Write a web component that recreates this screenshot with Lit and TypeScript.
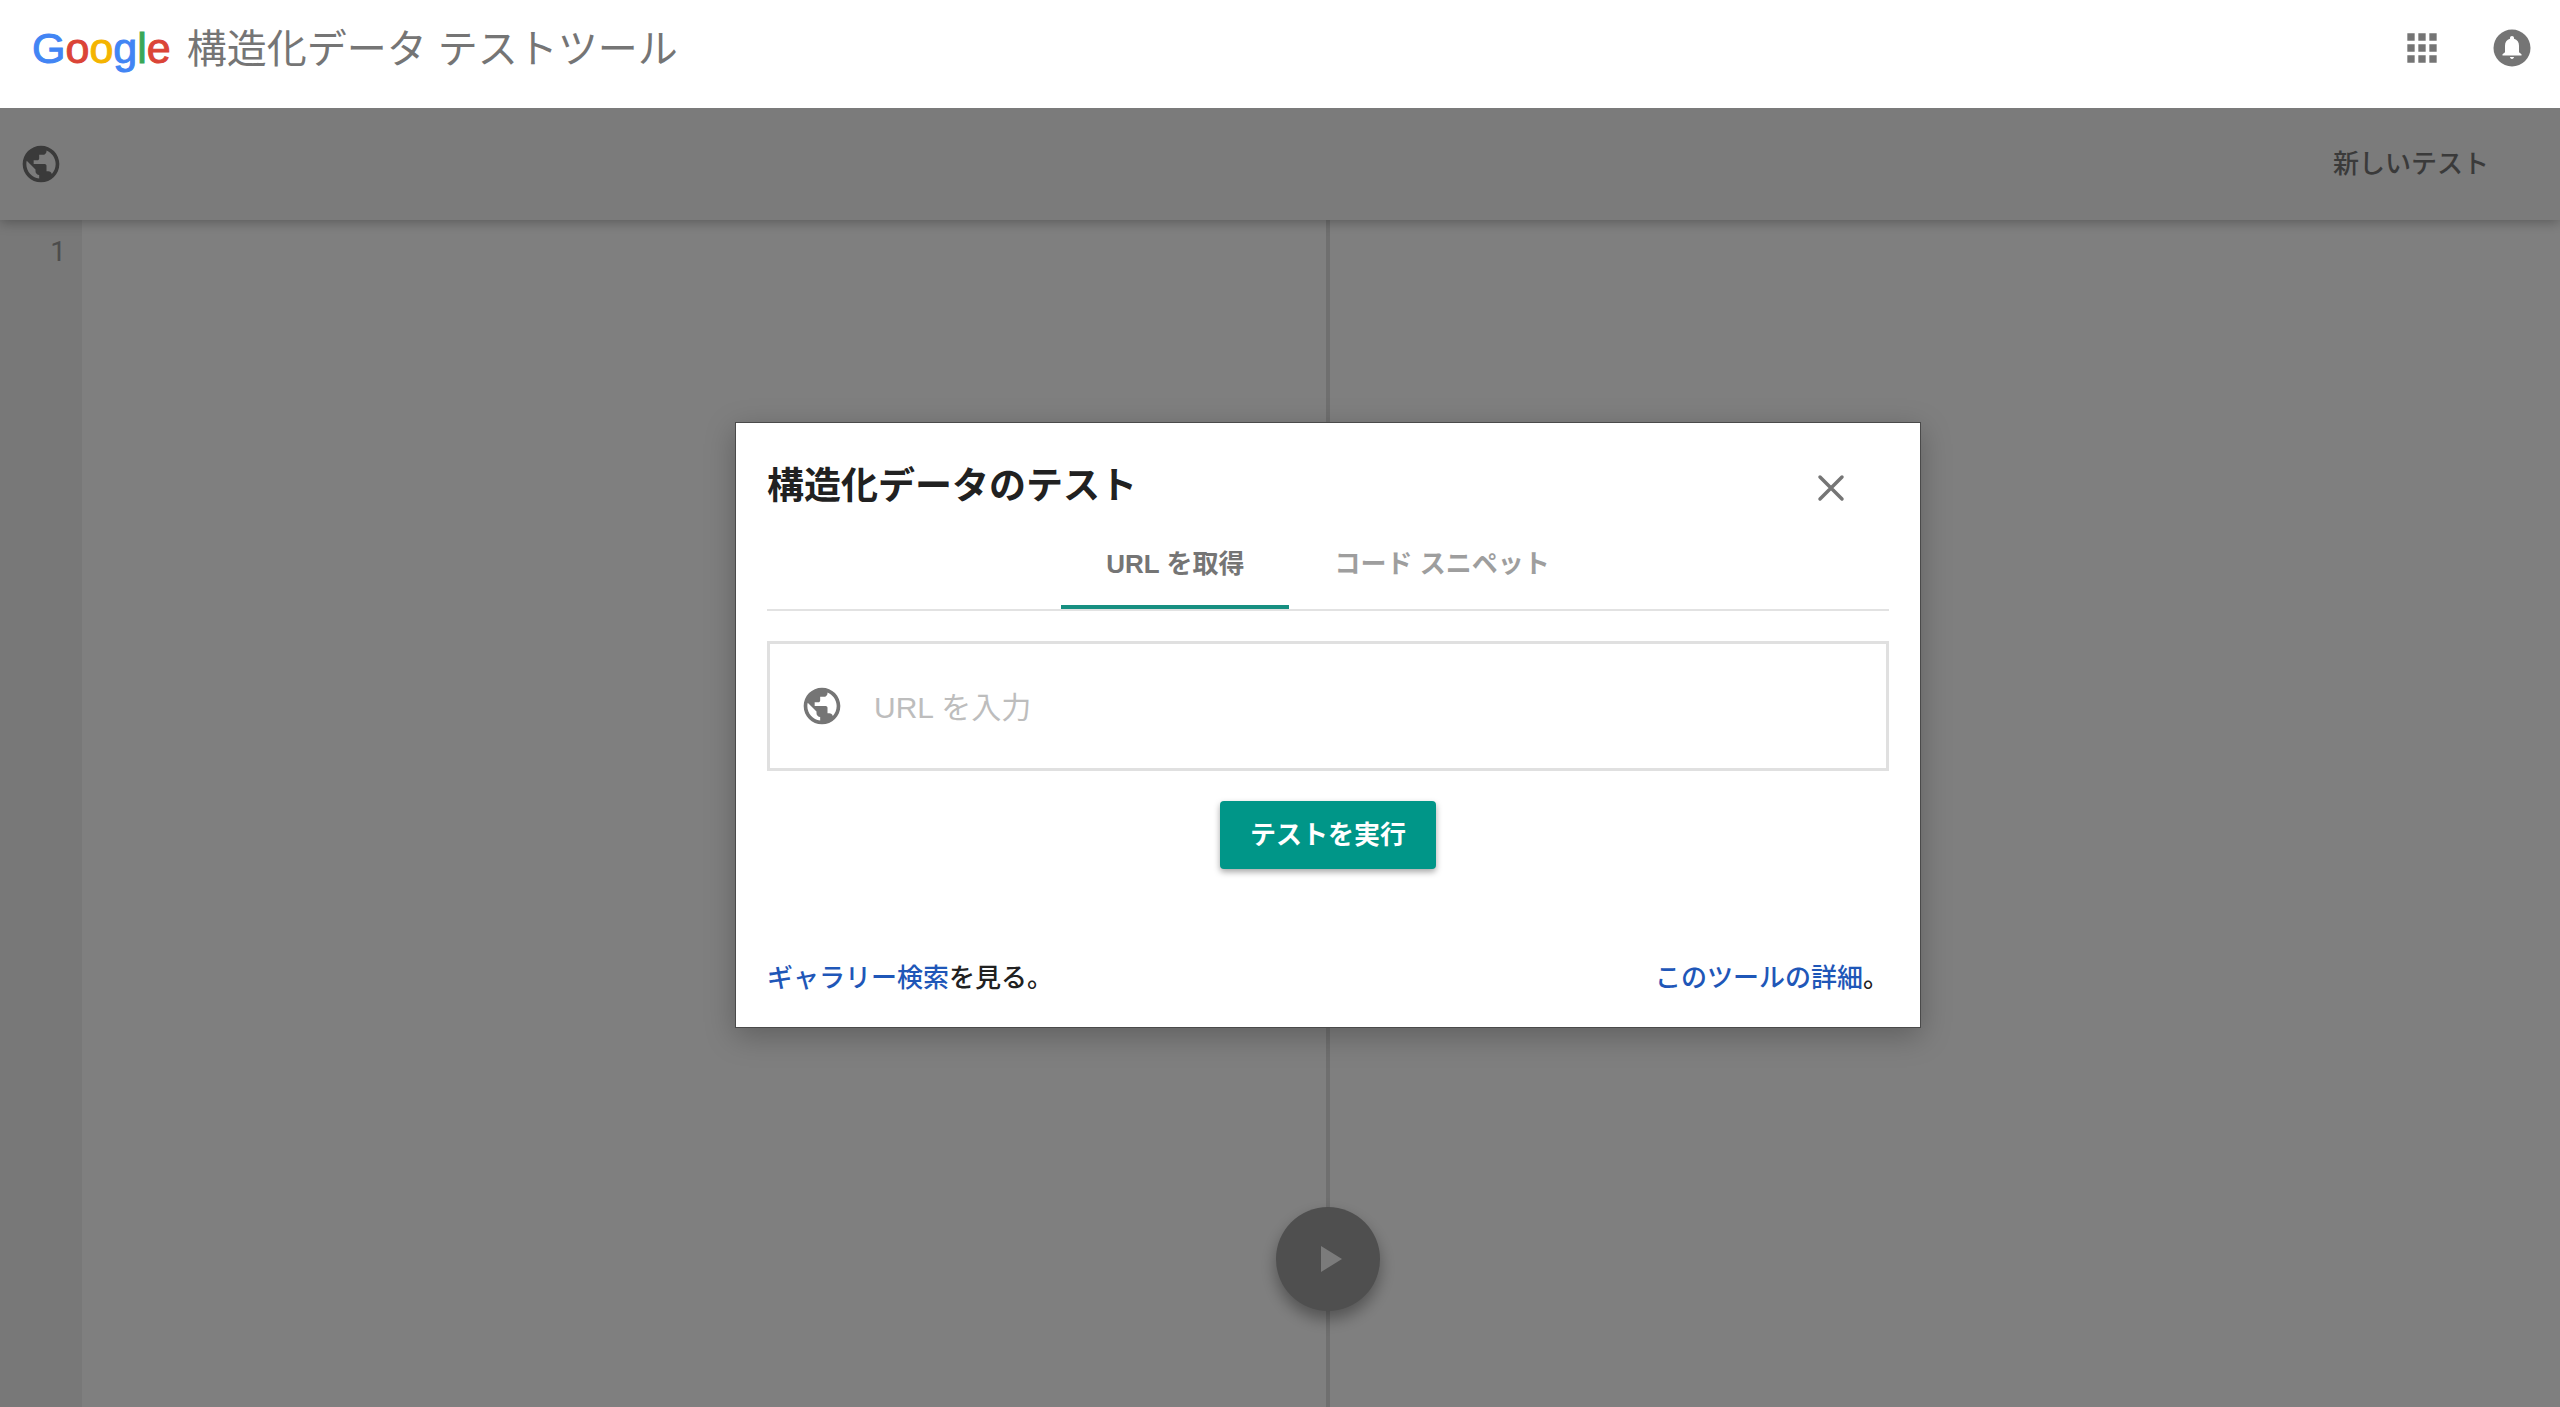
import { LitElement, html, css, svg } from "lit";
import { customElement, state } from "lit/decorators.js";
import { classMap } from "lit/directives/class-map.js";

const LOGO = [
  ["G", "blue"],
  ["o", "red"],
  ["o", "yellow"],
  ["g", "blue"],
  ["l", "green"],
  ["e", "red"],
];

const TABS = ["URL を取得", "コード スニペット"];

const globePath = svg`<path d="M12 2C6.48 2 2 6.48 2 12s4.48 10 10 10 10-4.48 10-10S17.52 2 12 2zm-1 17.93c-3.95-.49-7-3.85-7-7.93 0-.62.08-1.21.21-1.79L9 15v1c0 1.1.9 2 2 2v1.93zm6.9-2.54c-.26-.81-1-1.39-1.9-1.39h-1v-3c0-.55-.45-1-1-1H8v-2h2c.55 0 1-.45 1-1V7h2c1.1 0 2-.9 2-2v-.41c2.93 1.19 5 4.06 5 7.41 0 2.08-.8 3.97-2.1 5.39z"/>`;

const globe = html`<svg class="icon" viewBox="0 0 24 24" aria-hidden="true">${globePath}</svg>`;

@customElement("app-root")
export class AppRoot extends LitElement {
  @state() private tab = 0;

  static styles = css`
    :host {
      display: flex;
      flex-direction: column;
      min-height: 100vh;
      background: #fff;
      color: #212121;
      font-family: "Liberation Sans", "Noto Sans CJK JP", sans-serif;
      font-size: 26px;
      line-height: 40px;
    }
    * {
      box-sizing: border-box;
    }
    button,
    input {
      margin: 0;
      padding: 0;
      border: 0;
      background: none;
      font: inherit;
      color: inherit;
    }
    button {
      cursor: pointer;
    }
    a {
      color: #1f57b8;
      text-decoration: none;
    }
    .icon {
      display: block;
      width: 44px;
      height: 44px;
      fill: currentColor;
    }
    .header {
      display: flex;
      align-items: center;
      height: 108px;
      padding: 0 26px 12px 32px;
      color: #757575;
    }
    .brand {
      display: flex;
      align-items: baseline;
      flex: 1;
      gap: 16px;
      margin: 0;
      font-size: 40px;
      line-height: 60px;
      font-weight: 400;
    }
    .logo {
      font-size: 43px;
      -webkit-text-stroke: 1px currentColor;
    }
    .blue { color: #4285f4; }
    .red { color: #db4437; }
    .yellow { color: #f4b400; }
    .green { color: #3aa757; }
    .actions {
      display: flex;
      align-items: center;
      gap: 46px;
    }
    .stage {
      position: relative;
      display: flex;
      flex-direction: column;
      flex: 1;
      overflow: hidden;
    }
    .toolbar {
      position: relative;
      display: flex;
      align-items: center;
      justify-content: space-between;
      height: 112px;
      padding: 0 71px 0 19px;
      background: #f6f6f6;
      color: #757575;
      box-shadow: 0 2px 12px rgba(0, 0, 0, 0.3);
    }
    .new-test {
      font-weight: 500;
    }
    .panes {
      display: flex;
      flex: 1;
    }
    .editor {
      display: flex;
      width: calc(50% + 50px);
      border-right: 4px solid #dedede;
    }
    .gutter {
      width: 82px;
      padding: 12px 16px;
      background: #f0f0f0;
      color: #999;
      font-family: Roboto, sans-serif;
      font-size: 28px;
      text-align: right;
    }
    .run {
      position: absolute;
      left: calc(50% + 48px);
      bottom: 96px;
      display: grid;
      place-items: center;
      width: 104px;
      height: 104px;
      margin-left: -52px;
      border-radius: 50%;
      background: #9e9e9e;
      color: #f6f6f6;
      box-shadow: 0 8px 16px rgba(0, 0, 0, 0.35);
    }
    .scrim {
      position: absolute;
      inset: 0;
      display: flex;
      justify-content: center;
      align-items: flex-start;
      padding: 314px 0 0 96px;
      background: rgba(0, 0, 0, 0.5);
    }
    .dialog {
      width: 1186px;
      max-width: 100%;
      padding: 34px 31px 29px;
      border: 1px solid #4a4a4a;
      background: #fff;
      background-clip: padding-box;
      box-shadow: 0 8px 28px rgba(0, 0, 0, 0.25);
    }
    .dialog-head {
      display: flex;
      align-items: center;
      justify-content: space-between;
      height: 60px;
      padding-right: 36px;
    }
    .dialog-title {
      margin: 0;
      font-size: 37px;
      line-height: 60px;
      font-weight: 700;
    }
    .close {
      color: #757575;
    }
    .cross {
      fill: none;
      stroke: currentColor;
      stroke-width: 3.5;
      stroke-linecap: round;
    }
    .tabs {
      display: flex;
      justify-content: center;
      border-bottom: 2px solid #e2e2e2;
    }
    .tab {
      height: 92px;
      padding: 6px 45px 0;
      border-bottom: 4px solid transparent;
      color: #9e9e9e;
      font-weight: 700;
    }
    .tab.active {
      border-bottom-color: #168f81;
      color: #757575;
    }
    .field {
      display: flex;
      align-items: center;
      gap: 30px;
      height: 130px;
      margin: 30px 0;
      padding: 0 30px;
      border: 3px solid #e0e0e0;
      color: #757575;
    }
    .url {
      flex: 1;
      min-width: 0;
      height: 60px;
      padding-top: 4px;
      outline: 0;
      font-size: 30px;
    }
    .url::placeholder {
      color: #bdbdbd;
      opacity: 1;
    }
    .submit {
      display: block;
      height: 68px;
      margin: 0 auto;
      padding: 0 30px;
      border-radius: 4px;
      background: #009688;
      color: #fff;
      font-weight: 700;
      box-shadow: 0 3px 6px rgba(0, 0, 0, 0.35);
    }
    .links {
      display: flex;
      justify-content: space-between;
      margin-top: 89px;
      font-weight: 500;
    }
    .links p {
      margin: 0;
    }
  `;

  render() {
    return html`
      <header class="header">
        <h1 class="brand">
          <span class="logo">${LOGO.map(([ch, tone]) => html`<span class=${tone}>${ch}</span>`)}</span>
          <span>構造化データ テストツール</span>
        </h1>
        <div class="actions">
          <button aria-label="アプリ">
            <svg class="icon" viewBox="0 0 24 24">
              <path d="M4 8h4V4H4v4zm6 12h4v-4h-4v4zm-6 0h4v-4H4v4zm0-6h4v-4H4v4zm6 0h4v-4h-4v4zm6-10v4h4V4h-4zm-6 4h4V4h-4v4zm6 6h4v-4h-4v4zm0 6h4v-4h-4v4z" />
            </svg>
          </button>
          <button aria-label="通知">
            <svg class="icon" viewBox="0 0 44 44">
              <circle cx="22" cy="22" r="18.5" />
              <path fill="#fff" d="M22 10c1.200 0 2 .9 2 2v.7c3.300.9 5 3.600 5 7v6.600l2.500 2v1.200h-19v-1.200l2.500-2v-6.600c0-3.400 1.700-6.100 5-7v-.7c0-1.100.8-2 2-2zM20 31h4c0 1.100-.9 1.900-2 1.900s-2-.8-2-1.900z" />
            </svg>
          </button>
        </div>
      </header>
      <main class="stage">
        <div class="toolbar">
          ${globe}
          <button class="new-test">新しいテスト</button>
        </div>
        <div class="panes">
          <div class="editor"><div class="gutter">1</div></div>
        </div>
        <button class="run" aria-label="実行">
          <svg class="icon" viewBox="0 0 44 44"><path d="M15 9v26l21-13z" /></svg>
        </button>
        <div class="scrim">
          <section class="dialog" role="dialog" aria-labelledby="dialog-title">
            <div class="dialog-head">
              <h2 class="dialog-title" id="dialog-title">構造化データのテスト</h2>
              <button class="close" aria-label="閉じる">
                <svg class="icon cross" viewBox="0 0 44 44"><path d="M11 12l22 22M33 12l-22 22" /></svg>
              </button>
            </div>
            <div class="tabs" role="tablist">
              ${TABS.map(
                (label, i) => html`<button
                  role="tab"
                  aria-selected=${this.tab === i ? "true" : "false"}
                  class=${classMap({ tab: true, active: this.tab === i })}
                  @click=${() => (this.tab = i)}
                >${label}</button>`
              )}
            </div>
            <label class="field">
              ${globe}
              <input class="url" type="url" aria-label="URL を入力" placeholder="URL を入力" />
            </label>
            <button class="submit">テストを実行</button>
            <div class="links">
              <p><a href="#gallery">ギャラリー検索</a>を見る。</p>
              <p><a href="#details">このツールの詳細</a>。</p>
            </div>
          </section>
        </div>
      </main>
    `;
  }
}
